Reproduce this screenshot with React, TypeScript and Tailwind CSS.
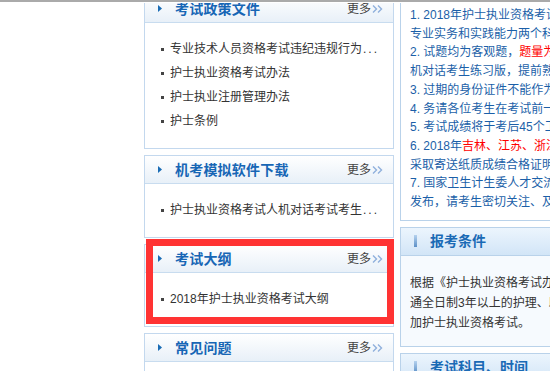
import React from 'react';

const FONT = { fontFamily: '"Liberation Sans", "Noto Sans CJK SC", sans-serif' };

const More: React.FC = () => (
  <a className="ml-auto flex items-center text-[12px] text-[#444]">
    更多
    <svg width="12" height="10" viewBox="0 0 12 10" className="ml-[1px]">
      <path d="M1 1.5 L4.5 5 L1 8.5" fill="none" stroke="#8fb0dc" strokeWidth="1.4" />
      <path d="M6 1.5 L9.5 5 L6 8.5" fill="none" stroke="#8fb0dc" strokeWidth="1.4" />
    </svg>
  </a>
);

const Item: React.FC<{ text: string }> = ({ text }) => {
  const cut = text.endsWith('...');
  return (
    <li className="h-[24px] flex items-center text-[12px] text-[#333] whitespace-nowrap">
      <span className="w-[3px] h-[3px] bg-[#444] mr-[6px] shrink-0" />
      {cut ? text.slice(0, -3) : text}
      {cut && <span className="tracking-[2px] ml-[1px]">...</span>}
    </li>
  );
};

const LeftPanel: React.FC<{ title: string; items: string[]; highlight?: boolean }> = ({ title, items, highlight }) => (
  <div className="relative border border-[#c3d8ee] bg-white">
    <div className="h-[28px] flex items-center border-b border-[#c8dcef] bg-linear-to-b from-white to-[#e8f0f8] pl-[13px] pr-[9px]">
      <svg width="4" height="7" viewBox="0 0 4 7">
        <path d="M0 0 L4 3.5 L0 7 Z" fill="#1a6cb5" />
      </svg>
      <h3 className="ml-[13px] text-[14px] font-bold text-[#1766b5] tracking-[0.2px] mt-[2px]">{title}</h3>
      <More />
    </div>
    <ul className="pl-[16px] pr-2 pt-[14px] pb-[15px]">
      {items.map((t) => (
        <Item key={t} text={t} />
      ))}
    </ul>
    {highlight && (
      <div className="absolute top-[-6px] left-[1px] right-[-1px] h-[85px] border-[7px] border-[#ff3333] pointer-events-none" />
    )}
  </div>
);

const RightHeader: React.FC<{ title: string }> = ({ title }) => (
  <div className="h-[28px] flex items-center border-b border-[#b9d2ea] bg-linear-to-b from-[#ecf5fd] to-[#d2e5f7] pl-[13px]">
    <span className="w-[3px] h-[12px] bg-linear-to-b from-[#b5d2ee] to-[#5d90c7]" />
    <h3 className="ml-[13px] text-[14px] font-bold text-[#1a6ab5] mt-[1px]">{title}</h3>
  </div>
);

const Red: React.FC<{ children: React.ReactNode }> = ({ children }) => (
  <span className="text-[#ff0000]">{children}</span>
);

const notices: React.ReactNode[] = [
  '1. 2018年护士执业资格考试包括',
  '专业实务和实践能力两个科目',
  <>2. 试题均为客观题，<Red>题量为</Red>每科</>,
  '机对话考生练习版，提前熟悉',
  '3. 过期的身份证件不能作为有效',
  '4. 务请各位考生在考试前一天',
  '5. 考试成绩将于考后45个工作日',
  <>6. 2018年<Red>吉林、江苏、浙江</Red>等</>,
  '采取寄送纸质成绩合格证明的',
  '7. 国家卫生计生委人才交流服务',
  '发布，请考生密切关注、及时',
];

export default function App() {
  return (
    <div className="relative w-full h-[371px] overflow-hidden bg-white" style={FONT}>
      <div className="flex items-start mt-[-6px] pl-[144px]">
        {/* left column */}
        <div className="w-[250px] shrink-0 flex flex-col gap-[6px]">
          <LeftPanel
            title="考试政策文件"
            items={['专业技术人员资格考试违纪违规行为...', '护士执业资格考试办法', '护士执业注册管理办法', '护士条例']}
          />
          <LeftPanel title="机考模拟软件下载" items={['护士执业资格考试人机对话考试考生...']} />
          <LeftPanel title="考试大纲" items={['2018年护士执业资格考试大纲']} highlight />
          <LeftPanel title="常见问题" items={['护士执业资格考试常见问题解答']} />
        </div>

        {/* right column */}
        <div className="ml-[6px] mt-[1px] w-[230px] shrink-0 flex flex-col gap-[6px]">
          <div className="border border-[#b9d2ea] bg-white pl-[9px] pt-[10px] pb-[8px]">
            {notices.map((n, i) => (
              <p key={i} className="text-[12px] leading-[18.7px] text-[#1b5fa8] whitespace-nowrap">
                {n}
              </p>
            ))}
          </div>
          <div className="border border-[#b9d2ea] bg-[#f6fafe]">
            <RightHeader title="报考条件" />
            <div className="pl-[9px] pt-[17px] pb-[13px] text-[12px] leading-[20px] text-[#333] whitespace-nowrap">
              <p>根据《护士执业资格考试办法》，在中</p>
              <p>通全日制3年以上的护理、助产专业</p>
              <p>加护士执业资格考试。</p>
            </div>
          </div>
          <div className="border border-[#b9d2ea] bg-[#f6fafe]">
            <RightHeader title="考试科目、时间" />
            <div className="h-[60px]" />
          </div>
        </div>
      </div>

      {/* top rule */}
      <div className="absolute top-0 left-0 right-0 h-[3px] bg-white border-t-2 border-[#aaaaaa]" />
    </div>
  );
}
